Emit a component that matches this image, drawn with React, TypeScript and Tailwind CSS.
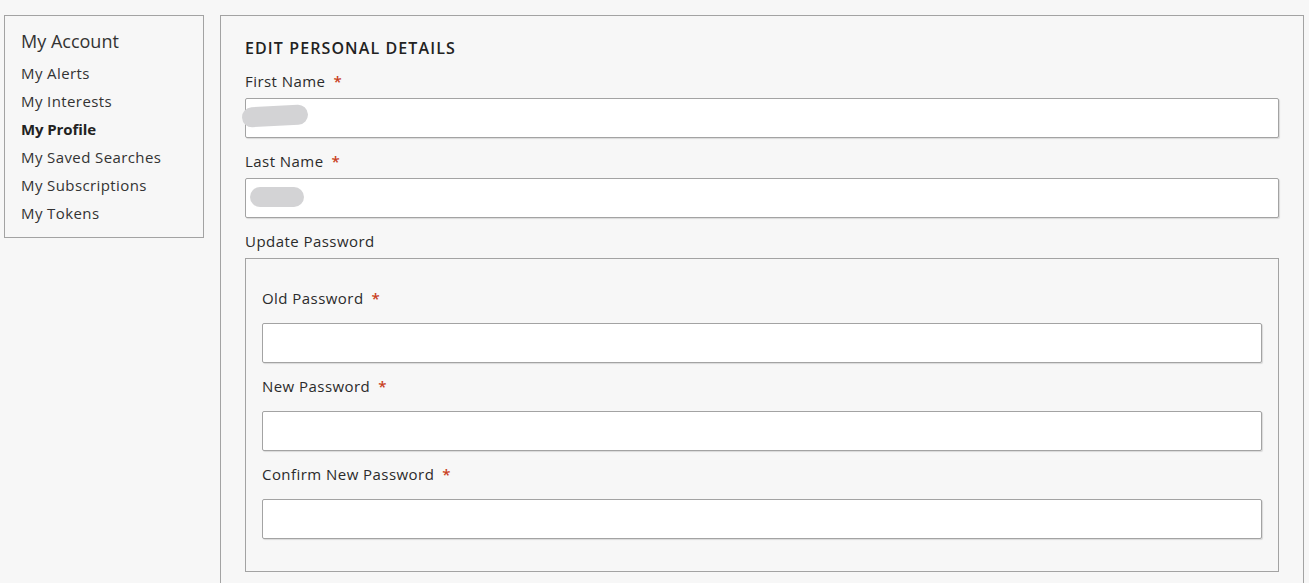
import React from "react";

const font = { fontFamily: "'Open Sans', Lato, sans-serif" };

function Req() {
  return <span className="ml-[8px] text-[15px] font-semibold text-[#c9401c]">*</span>;
}

const labelCls = "h-[20px] leading-[20px] text-[15px] tracking-[0.45px] text-[#2b2b2b]";
const inputCls = "h-[40px] relative bg-white border border-[#a3a3a3] rounded-[2px] shadow-[1px_1px_1px_rgba(0,0,0,0.12)]";

function Field({ label, children }: { label: string; children?: React.ReactNode }) {
  return (
    <div>
      <div className={labelCls}>
        {label}
        <Req />
      </div>
      <div className={`mt-[7px] ${inputCls}`}>{children}</div>
    </div>
  );
}

function PwField({ label }: { label: string }) {
  return (
    <div>
      <div className={labelCls}>
        {label}
        <Req />
      </div>
      <div className={`mt-[15px] ${inputCls}`} />
    </div>
  );
}

export default function App() {
  const items = ["My Alerts", "My Interests", "My Profile", "My Saved Searches", "My Subscriptions", "My Tokens"];
  return (
    <div className="min-h-[583px] bg-[#f7f7f7] pt-[15px] pl-[4px] pr-[5px] flex gap-[16px] items-start" style={font}>
      <div className="w-[200px] shrink-0 border border-[#a3a3a3] pl-[16px] pt-[13px] pb-[10px]">
        <div className="h-[24px] leading-[24px] text-[18px] text-[#333]">My Account</div>
        <div className="mt-[6px]">
          {items.map((it) => (
            <div
              key={it}
              className={
                it === "My Profile"
                  ? "h-[28px] leading-[28px] text-[15px] font-bold tracking-[-0.1px] text-[#222]"
                  : "h-[28px] leading-[28px] text-[15px] tracking-[0.4px] text-[#333]"
              }
            >
              {it}
            </div>
          ))}
        </div>
      </div>
      <div className="flex-1 min-h-[568px] border-t border-l border-r border-[#a3a3a3] px-[24px] pt-[22px]">
        <div className="h-[20px] leading-[20px] text-[16px] font-semibold tracking-[1.1px] text-[#222]">EDIT PERSONAL DETAILS</div>
        <div className="mt-[13px]">
          <Field label="First Name">
            <div className="absolute left-[-4px] top-[7px] w-[66px] h-[20px] rounded-full bg-[#d3d3d5] -rotate-[3deg]" />
          </Field>
        </div>
        <div className="mt-[13px]">
          <Field label="Last Name">
            <div className="absolute left-[4px] top-[8px] w-[54px] h-[20px] rounded-full bg-[#d3d3d5]" />
          </Field>
        </div>
        <div className={`mt-[13px] ${labelCls}`}>Update Password</div>
        <div className="mt-[7px] border border-[#a3a3a3] px-[16px] pt-[29px] pb-[32px]">
          <PwField label="Old Password" />
          <div className="mt-[13px]">
            <PwField label="New Password" />
          </div>
          <div className="mt-[13px]">
            <PwField label="Confirm New Password" />
          </div>
        </div>
      </div>
    </div>
  );
}
